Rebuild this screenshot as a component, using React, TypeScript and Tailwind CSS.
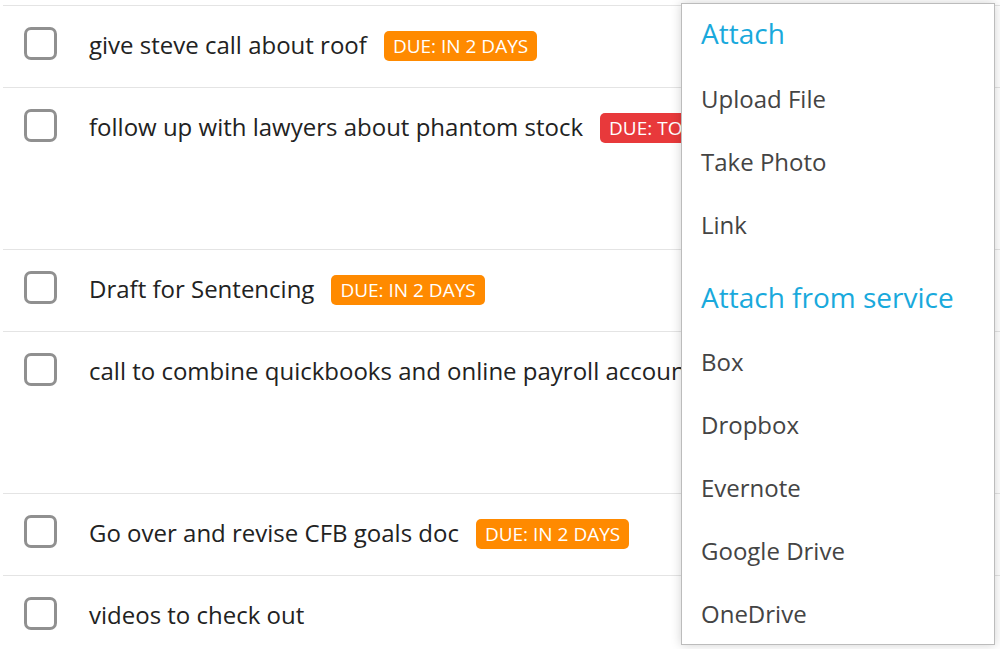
type Task = { title: string; due?: string; overdue?: boolean; tall?: boolean };

const tasks: Task[] = [
  { title: "give steve call about roof", due: "DUE: IN 2 DAYS" },
  { title: "follow up with lawyers about phantom stock", due: "DUE: TODAY", overdue: true, tall: true },
  { title: "Draft for Sentencing", due: "DUE: IN 2 DAYS" },
  { title: "call to combine quickbooks and online payroll accounts", tall: true },
  { title: "Go over and revise CFB goals doc", due: "DUE: IN 2 DAYS" },
  { title: "videos to check out" },
];

const attachItems = ["Upload File", "Take Photo", "Link"];
const serviceItems = ["Box", "Dropbox", "Evernote", "Google Drive", "OneDrive"];

function TaskRow({ task }: { task: Task }) {
  return (
    <div
      className={`flex items-start border-t border-[#e4e4e4] pt-[21px] pl-[21px] ${
        task.tall ? "h-[162px]" : "h-[82px]"
      }`}
    >
      <div className="w-[33px] h-[33px] shrink-0 rounded-[7px] border-[3px] border-[#909090] bg-white" />
      <div className="ml-[32px] flex items-center h-[35px] whitespace-nowrap">
        <span className="text-[24px] leading-[32px] text-[#222]">{task.title}</span>
        {task.due && (
          <span
            className={`ml-[17px] mt-[3px] inline-flex items-center h-[30px] px-[9px] rounded-[5px] text-white text-[19px] ${
              task.overdue ? "bg-[#e8393b]" : "bg-[#ff8a00]"
            }`}
          >
            {task.due}
          </span>
        )}
      </div>
    </div>
  );
}

export default function App() {
  return (
    <div
      className="relative w-[1000px] h-[649px] overflow-hidden bg-white"
      style={{ fontFamily: '"Open Sans", "Noto Sans", sans-serif' }}
    >
      <div className="pt-[5px] pl-[3px]">
        {tasks.map((t) => (
          <TaskRow key={t.title} task={t} />
        ))}
      </div>

      <div className="absolute left-[681px] top-[3px] w-[314px] h-[642px] bg-white border border-[#bcbcbc] shadow-[0_0_10px_rgba(0,0,0,0.18)] pl-[19px]">
        <div className="h-[63px] pb-[6px] flex items-center text-[28px] text-[#19a9dc]">Attach</div>
        {attachItems.map((i) => (
          <div key={i} className="h-[63px] flex items-center text-[24px] text-[#444]">
            {i}
          </div>
        ))}
        <div className="h-[74px] flex items-center pt-[8px] text-[28px] text-[#19a9dc]">Attach from service</div>
        {serviceItems.map((i) => (
          <div key={i} className="h-[63px] flex items-center text-[24px] text-[#444]">
            {i}
          </div>
        ))}
      </div>
    </div>
  );
}
